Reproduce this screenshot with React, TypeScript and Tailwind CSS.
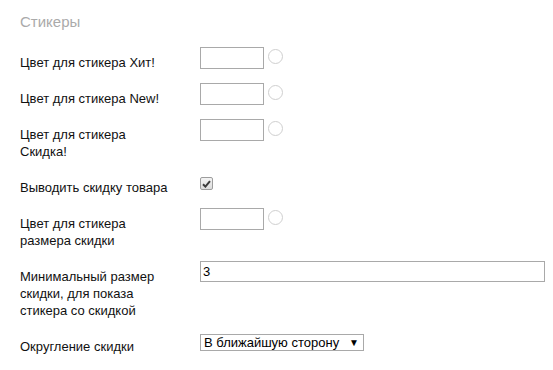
import React from 'react';

interface RowProps {
    label: string;
    children: React.ReactNode;
}

const Row: React.FC<RowProps> = ({ label, children }) => (
    <div className="flex items-start">
        <div className="w-[180px] shrink-0 pr-[28px] pt-[7px] leading-[17px]">{label}</div>
        <div className="flex items-start">{children}</div>
    </div>
);

const ColorField: React.FC = () => (
    <div className="flex items-start">
        <div className="w-[64px] h-[22px] border border-[#a9a9a9] bg-white" />
        <div className="ml-[4px] mt-[2px] w-[15px] h-[15px] rounded-full border border-[#cfcfcf] bg-white" />
    </div>
);

export default function App() {
    const fields = [
        'Цвет для стикера Хит!',
        'Цвет для стикера New!',
        'Цвет для стикера Скидка!',
    ];

    return (
        <div className="w-[553px] h-[370px] bg-white pl-[20px] pt-[13px] text-[13px] text-[#111] font-['Liberation_Sans',Arial,sans-serif]">
            <h2 className="text-[15px] leading-[17px] text-[#aaaaaa] font-normal mb-[17px]">Стикеры</h2>

            <div className="flex flex-col gap-[12px]">
                {fields.map((f) => (
                    <Row key={f} label={f}>
                        <ColorField />
                    </Row>
                ))}

                <Row label="Выводить скидку товара">
                    <div className="mt-[5px] w-[13px] h-[13px] rounded-[2px] border border-[#9d9d9d] bg-gradient-to-b from-[#f4f4f4] to-[#dcdcdc] flex items-center justify-center">
                        <svg width="9" height="8" viewBox="0 0 9 8">
                            <path d="M1 4.2 L3.4 6.6 L8 1.2" fill="none" stroke="#3b3b3b" strokeWidth="2" />
                        </svg>
                    </div>
                </Row>

                <Row label="Цвет для стикера размера скидки">
                    <ColorField />
                </Row>

                <Row label="Минимальный размер скидки, для показа стикера со скидкой">
                    <div className="w-[345px] h-[21px] border border-[#a9a9a9] bg-white pl-[2px] leading-[19px] text-black">
                        3
                    </div>
                </Row>

                <Row label="Округление скидки">
                    <div className="mt-[3px] w-[164px] h-[17px] border border-[#a9a9a9] bg-white flex items-center justify-between pl-[3px] pr-[4px] leading-[15px] text-black">
                        <span>В ближайшую сторону</span>
                        <span className="text-[10px] leading-none">▼</span>
                    </div>
                </Row>
            </div>
        </div>
    );
}
